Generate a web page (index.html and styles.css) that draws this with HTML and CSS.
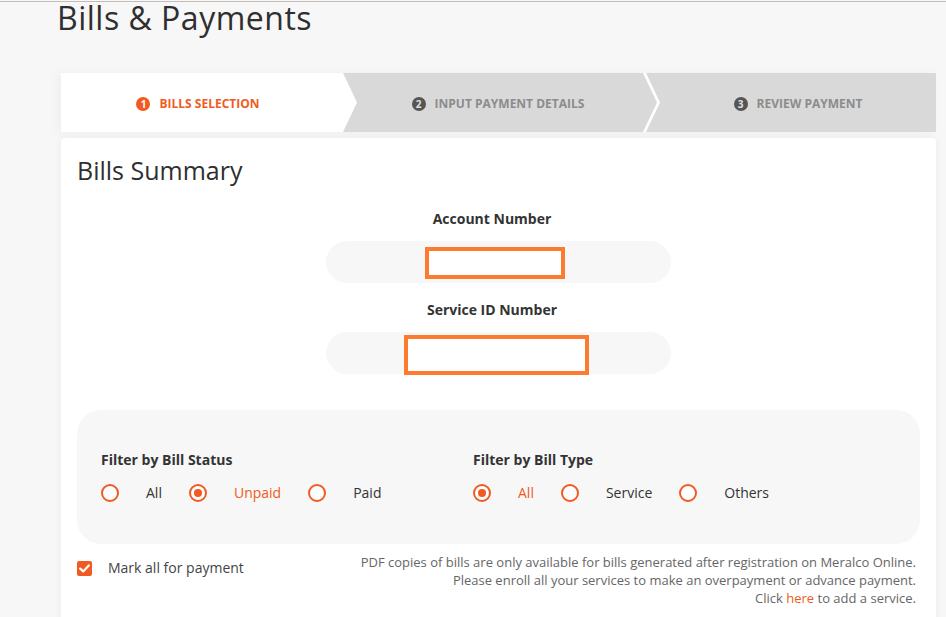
FILE: index.html
```html
<!DOCTYPE html>
<html lang="en">
<head>
  <meta charset="UTF-8">
  <meta name="viewport" content="width=device-width, initial-scale=1.0">
  <title>Bills &amp; Payments</title>
  <link rel="stylesheet" href="styles.css">
</head>
<body>
  <div class="topLine"></div>

  <main class="page">
    <h1 class="pageTitle">Bills &amp; Payments</h1>

    <!-- 단계 표시 -->
    <ol class="stepper">
      <li class="step first active"><span class="stepNum">1</span>Bills Selection</li>
      <li class="step middle"><span class="stepNum">2</span>Input Payment Details</li>
      <li class="step last"><span class="stepNum">3</span>Review Payment</li>
    </ol>

    <section class="card">
      <h2 class="cardTitle">Bills Summary</h2>

      <div class="field">
        <div class="fieldLabel">Account Number</div>
        <div class="fieldValue"><span class="mask maskAccount"></span></div>
      </div>

      <div class="field second">
        <div class="fieldLabel">Service ID Number</div>
        <div class="fieldValue"><span class="mask maskService"></span></div>
      </div>

      <!-- 필터 영역 -->
      <div class="filterBox">
        <div class="filterGroup status">
          <div class="filterTitle">Filter by Bill Status</div>
          <div class="radioRow">
            <label class="radio"><span class="radioDot"></span>All</label>
            <label class="radio checked"><span class="radioDot"></span>Unpaid</label>
            <label class="radio"><span class="radioDot"></span>Paid</label>
          </div>
        </div>
        <div class="filterGroup">
          <div class="filterTitle">Filter by Bill Type</div>
          <div class="radioRow">
            <label class="radio checked"><span class="radioDot"></span>All</label>
            <label class="radio"><span class="radioDot"></span>Service</label>
            <label class="radio"><span class="radioDot"></span>Others</label>
          </div>
        </div>
      </div>

      <div class="bottomRow">
        <label class="markAll">
          <span class="checkBox">
            <svg width="11" height="9" viewBox="0 0 11 9"><path d="M1.2 4.6 L4.2 7.4 L9.8 1.4" fill="none" stroke="#fff" stroke-width="2.2" stroke-linecap="round" stroke-linejoin="round"/></svg>
          </span>
          Mark all for payment
        </label>
        <p class="note">
          PDF copies of bills are only available for bills generated after registration on Meralco Online.<br>
          Please enroll all your services to make an overpayment or advance payment.<br>
          Click <a href="#" class="link">here</a> to add a service.
        </p>
      </div>
    </section>
  </main>
</body>
</html>
```

FILE: styles.css
```css
/* 공통 스타일 */
body {
  margin: 0;
  background: #f7f7f7;
  font-family: "Open Sans", "Liberation Sans", sans-serif;
  color: #333;
  overflow: hidden;
}

.topLine {
  height: 1px;
  border-bottom: 1px solid #c4bcb7;
}

.page {
  padding: 0 10px 0 57px;
}

.pageTitle {
  margin: 0;
  font-size: 32px;
  line-height: 28px;
  padding-top: 2px;
  font-weight: 400;
  letter-spacing: 0.5px;
  color: #2f2f2f;
}

/* 단계 표시 */
.stepper {
  list-style: none;
  margin: 41px 0 0 4px;
  padding: 0;
  height: 59px;
  display: flex;
  background: #fff;
  box-shadow: -4px 0 10px rgba(0, 0, 0, 0.04);
}

.step {
  display: flex;
  align-items: center;
  justify-content: center;
  padding-top: 2px;
  box-sizing: border-box;
  font-size: 12px;
  font-weight: 700;
  text-transform: uppercase;
  color: #8c8c8c;
  background: #d9d9d9;
}

.step.first {
  flex: 0 0 293px;
  padding-right: 19px;
  background: #fff;
  clip-path: polygon(0 0, calc(100% - 14px) 0, 100% 50%, calc(100% - 14px) 100%, 0 100%);
}

.step.middle {
  flex: 0 0 314px;
  margin-left: -11px;
  padding-right: 4px;
  clip-path: polygon(0 0, calc(100% - 14px) 0, 100% 50%, calc(100% - 14px) 100%, 0 100%, 14px 50%);
}

.step.last {
  flex: 1;
  margin-left: -11px;
  padding-left: 14px;
  clip-path: polygon(0 0, 100% 0, 100% 100%, 0 100%, 14px 50%);
}

.step.active {
  color: #f15a22;
}

.stepNum {
  width: 14px;
  height: 14px;
  border-radius: 50%;
  margin-right: 9px;
  background: #555;
  color: #e0e0e0;
  font-size: 10px;
  line-height: 14px;
  text-align: center;
}

.step.active .stepNum {
  background: #f15a22;
  color: #fff;
}

/* 카드 */
.card {
  margin: 6px 0 0 4px;
  padding: 16px 16px 40px;
  background: #fff;
  border-radius: 4px;
  box-shadow: 0 0 8px rgba(0, 0, 0, 0.05);
}

.cardTitle {
  margin: 0;
  font-size: 25px;
  line-height: 32px;
  font-weight: 400;
  color: #2f2f2f;
}

.field {
  margin-top: 23px;
}

.field.second {
  margin-top: 17px;
}

.fieldLabel {
  padding-right: 13px;
  text-align: center;
  font-size: 14px;
  line-height: 20px;
  font-weight: 700;
}

.fieldValue {
  width: 345px;
  height: 42px;
  margin: 12px auto 0;
  border-radius: 21px;
  background: #f7f7f7;
  display: flex;
  align-items: center;
  justify-content: center;
}

.mask {
  box-sizing: border-box;
  border: 4px solid #fd7b2f;
  background: #fff;
}

.maskAccount {
  width: 140px;
  height: 32px;
  margin: 2px 7px 0 0;
}

.maskService {
  width: 185px;
  height: 40px;
  margin: 3px 4px 0 0;
}

/* 필터 */
.filterBox {
  margin-top: 36px;
  padding: 40px 24px 41px;
  background: #f7f7f7;
  border-radius: 24px;
  display: flex;
}

.filterGroup.status {
  flex: 0 0 372px;
}

.filterTitle {
  font-size: 14px;
  line-height: 20px;
  font-weight: 700;
}

.radioRow {
  margin-top: 13px;
  display: flex;
}

.radio {
  display: flex;
  align-items: center;
  height: 20px;
  margin-right: 27px;
  font-size: 14px;
  line-height: 20px;
  color: #333;
}

.radio.checked {
  color: #f15a22;
}

.radioDot {
  box-sizing: border-box;
  width: 18px;
  height: 18px;
  margin-right: 27px;
  border: 2px solid #f15a22;
  border-radius: 50%;
  background: #fff;
  position: relative;
}

.radio.checked .radioDot::after {
  content: "";
  position: absolute;
  top: 3px;
  left: 3px;
  width: 8px;
  height: 8px;
  border-radius: 50%;
  background: #f15a22;
}

/* 하단 */
.bottomRow {
  margin-top: 9px;
  display: flex;
  justify-content: space-between;
  align-items: flex-start;
}

.markAll {
  display: flex;
  align-items: center;
  padding-top: 5px;
  font-size: 14px;
  line-height: 20px;
  color: #444;
}

.checkBox {
  width: 15px;
  height: 15px;
  margin-right: 16px;
  border-radius: 2px;
  background: #f15a22;
  display: flex;
  align-items: center;
  justify-content: center;
}

.note {
  margin: 0;
  padding-right: 4px;
  text-align: right;
  font-size: 13px;
  line-height: 18px;
  color: #666;
}

.link {
  color: #f15a22;
  text-decoration: none;
}
```
